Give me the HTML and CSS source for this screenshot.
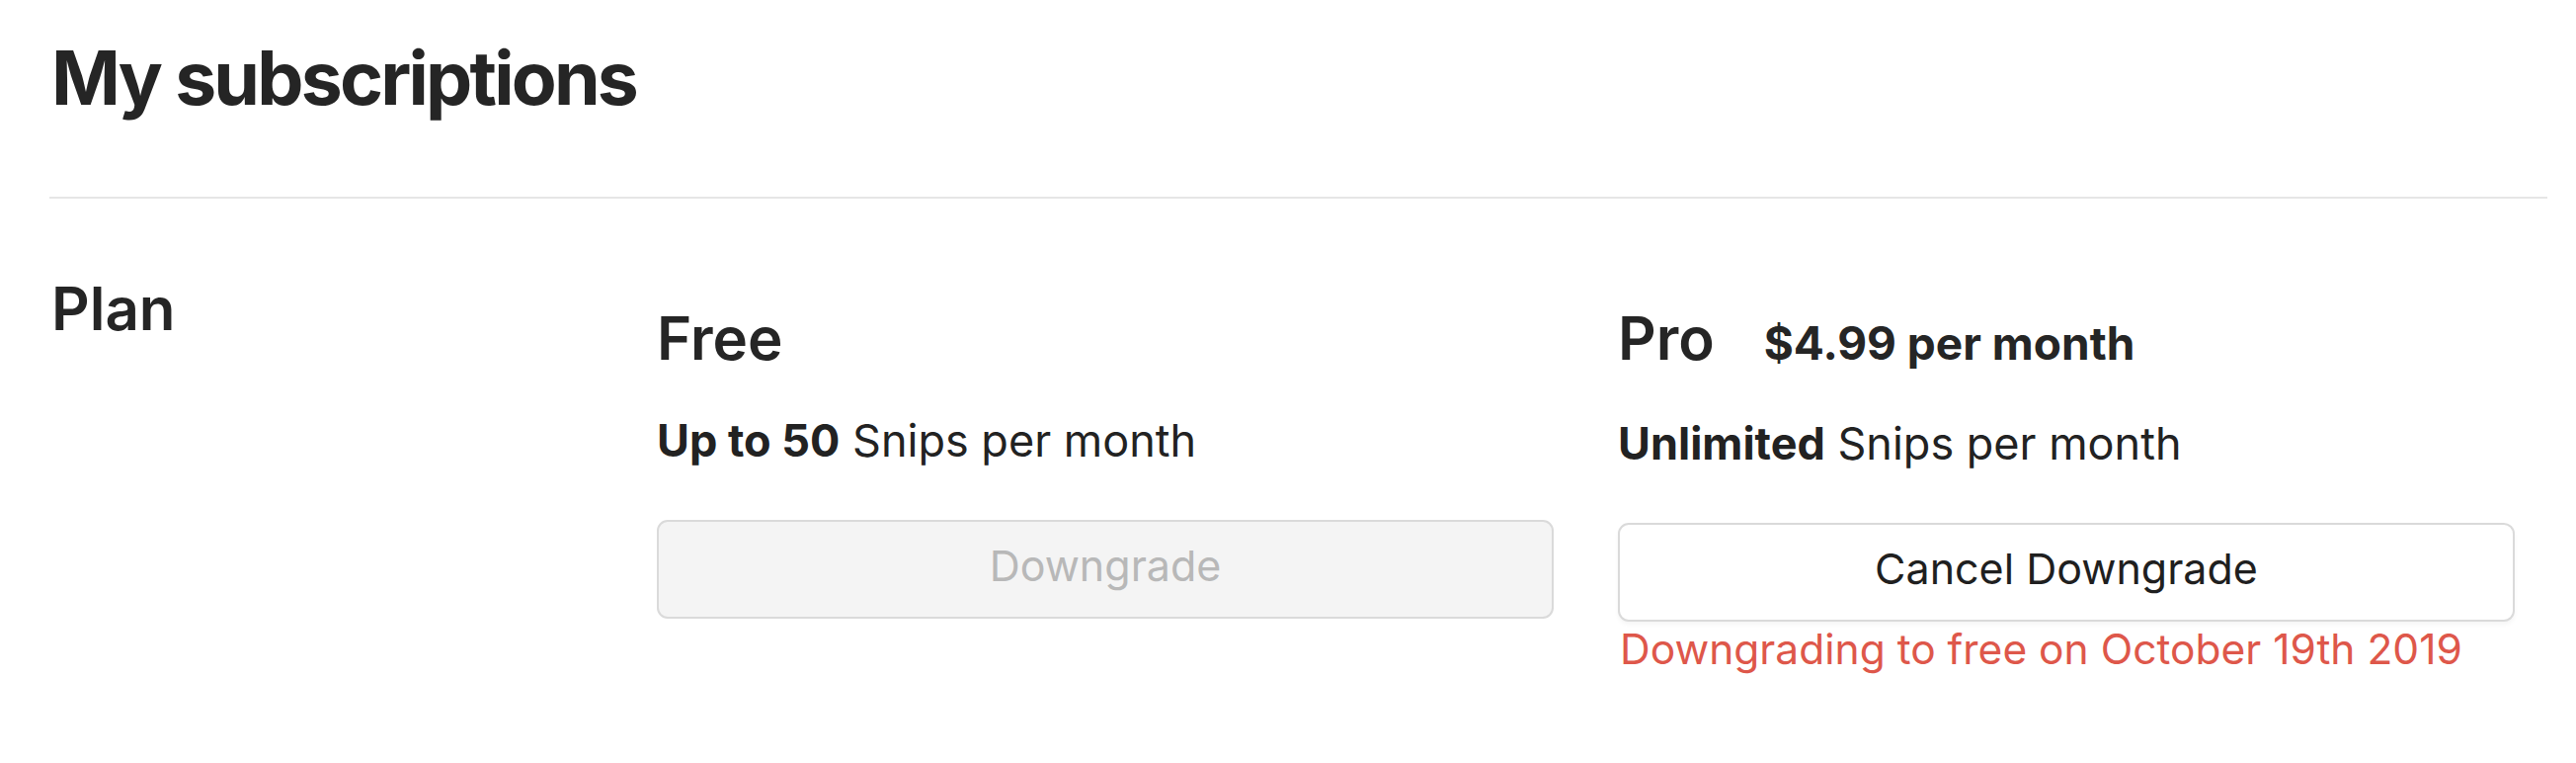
FILE: index.html
```html
<!DOCTYPE html>
<html lang="en">
<head>
<meta charset="utf-8">
<title>My subscriptions</title>
<link rel="stylesheet" href="styles.css">
</head>
<body>
<div class="page">
  <h1 class="title">My subscriptions</h1>
  <hr class="divider">
  <section class="plan-row">
    <h2 class="label">Plan</h2>
    <div class="plan">
      <div class="plan-head"><span class="plan-name">Free</span></div>
      <p class="plan-desc"><strong>Up to 50</strong> Snips per month</p>
      <button class="btn btn-disabled" type="button" disabled>Downgrade</button>
    </div>
    <div class="plan">
      <div class="plan-head"><span class="plan-name">Pro</span><span class="plan-price">$4.99 per month</span></div>
      <p class="plan-desc"><strong>Unlimited</strong> Snips per month</p>
      <button class="btn" type="button">Cancel Downgrade</button>
      <p class="note">Downgrading to free on October 19th 2019</p>
    </div>
  </section>
</div>
</body>
</html>
```

FILE: styles.css
```css
html, body {
  margin: 0;
  padding: 0;
  background: #ffffff;
}

body {
  font-family: Inter, "Liberation Sans", Arial, sans-serif;
  color: #252525;
}

.page {
  padding: 41px 29px 0 50px;
}

.title {
  margin: 0 0 0 2px;
  font-size: 75px;
  line-height: 76px;
  font-weight: 700;
  letter-spacing: -2.8px;
}

.divider {
  margin: 82px 0 0 0;
  border: 0;
  height: 2px;
  background: #e6e6e6;
}

.plan-row {
  display: grid;
  grid-template-columns: 550px 908px 908px;
  column-gap: 65px;
  margin-top: 81px;
}

.label {
  margin: 0 0 0 2px;
  font-size: 60px;
  line-height: 60px;
  font-weight: 600;
}

.plan {
  display: flex;
  flex-direction: column;
  padding-top: 30px;
}

.plan-head {
  display: flex;
  align-items: baseline;
  gap: 50px;
}

.plan-name {
  font-size: 60px;
  line-height: 60px;
  font-weight: 600;
}

.plan-price {
  font-size: 46px;
  font-weight: 700;
}

.plan-desc {
  margin: 42px 0 0 0;
  font-size: 45px;
  line-height: 64px;
  color: #222222;
}

.plan-desc strong {
  font-weight: 700;
}

.btn {
  margin-top: 48px;
  height: 100px;
  width: 100%;
  border: 2px solid #dadada;
  border-radius: 11px;
  background: #ffffff;
  font-family: Inter, "Liberation Sans", Arial, sans-serif;
  font-size: 43px;
  color: #1f1f1f;
  box-shadow: 0 3px 4px rgba(0, 0, 0, 0.04);
  padding: 0 0 8px 0;
}

.btn-disabled {
  background: #f4f4f4;
  color: #b8b8b8;
  box-shadow: none;
}

.note {
  margin: 2px 0 0 2px;
  font-size: 42.5px;
  line-height: 52px;
  color: #de574a;
}
```
